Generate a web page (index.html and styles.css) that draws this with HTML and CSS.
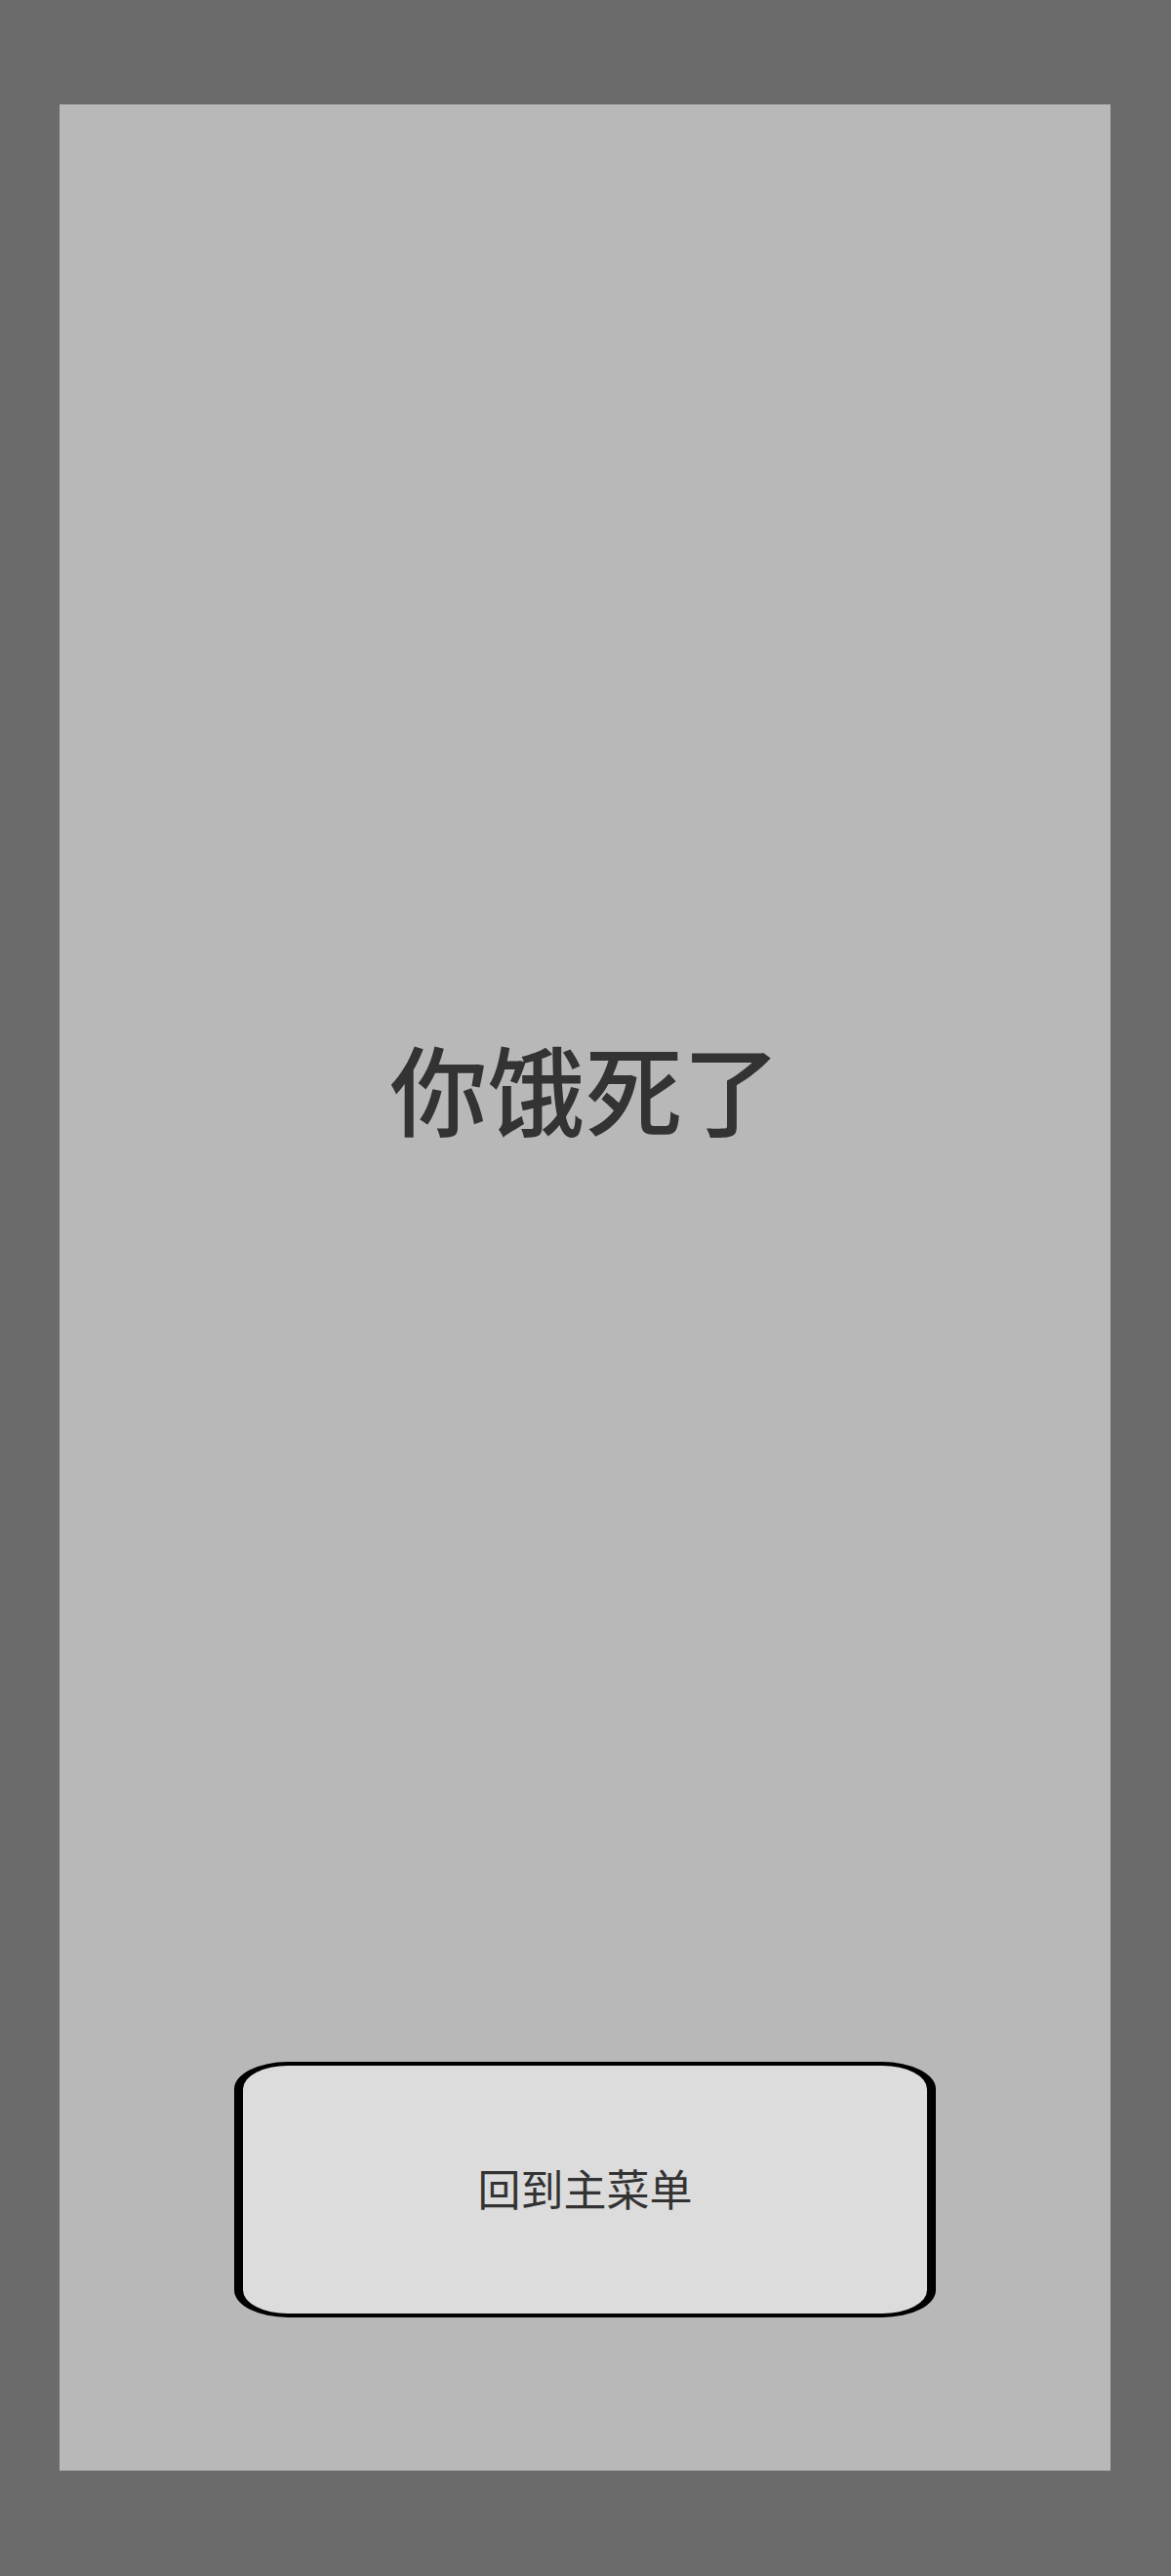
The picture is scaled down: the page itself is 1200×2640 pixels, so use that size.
FILE: index.html
```html
<!DOCTYPE html>
<html lang="zh-CN">
<head>
<meta charset="utf-8">
<title>你饿死了</title>
<link rel="stylesheet" href="styles.css">
</head>
<body>
<div class="screen">
  <main class="panel">
    <div class="title-area">
      <h1 class="title">你饿死了</h1>
    </div>
    <button class="menu-btn" type="button">回到主菜单</button>
  </main>
</div>
</body>
</html>
```

FILE: styles.css
```css
html, body {
  margin: 0;
  padding: 0;
  background: #6b6b6b;
}
.screen {
  width: 1200px;
  height: 2640px;
  box-sizing: border-box;
  padding: 107px 62px 108px 61px;
  display: flex;
}
.panel {
  flex: 1;
  background: #b8b8b8;
  display: flex;
  flex-direction: column;
  align-items: center;
  padding-bottom: 157px;
  box-sizing: border-box;
}
.title-area {
  flex: 1;
  display: flex;
  align-items: center;
  justify-content: center;
  align-self: stretch;
}
.title {
  margin: 0;
  font-family: "Noto Sans CJK SC", "Noto Sans", sans-serif;
  font-weight: 500;
  font-size: 100px;
  line-height: 1;
  color: #333333;
  padding-top: 8px;
}
.menu-btn {
  width: 719px;
  height: 262px;
  box-sizing: border-box;
  background: #dcdcdc;
  border: 4px solid #000;
  border-left-width: 9px;
  border-right-width: 9px;
  border-radius: 55px / 28px;
  font-family: "Noto Sans CJK SC", "Noto Sans", sans-serif;
  font-size: 44px;
  font-weight: 400;
  color: #333333;
  padding: 0 0 5px 0;
  margin: 0;
  cursor: pointer;
}
```
